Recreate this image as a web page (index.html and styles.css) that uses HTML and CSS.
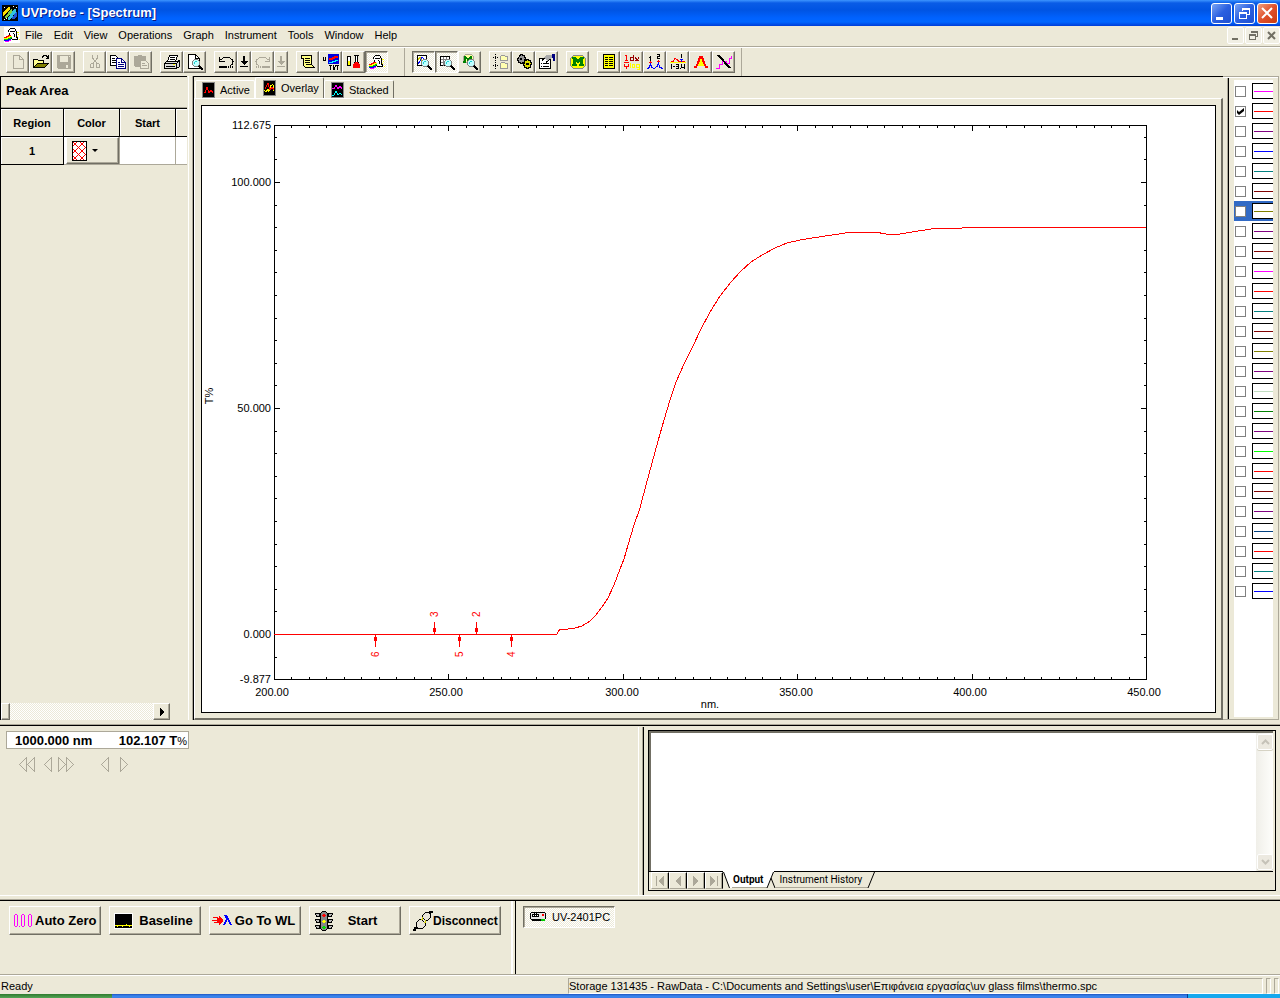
FILE: index.html
```
<!DOCTYPE html>
<html lang="en">
<head>
    <meta charset="UTF-8">
    <meta name="viewport" content="width=device-width, initial-scale=1.0">
    <title>UVProbe - [Spectrum]</title>
    <link rel="stylesheet" href="styles.css">
</head>
<body>
    <header class="titlebar">
        <svg class="icon" viewBox="0 0 16 16"><path fill="#000" d="M0 0h16v16H0z"/><path fill="#ffe000" d="M1 8l5-6h2v2l-6 7H1z"/><path fill="#80d040" d="M3 12l6-8h1v3l-5 6H3z"/><path fill="#30c0e0" d="M6 13l6-9h2v3l-6 8H6z"/><path fill="#2050d0" d="M10 13l4-6h1v4l-3 3h-2z"/><path fill="#fff" d="M2 2h1v1H2zM11 1h1v1h-1zM14 2h1v1h-1zM2 14h1v1H2zM4 13h1v1H4z"/></svg>
        <h1>UVProbe - [Spectrum]</h1>
        <div class="window-buttons">
            <button class="win-btn" aria-label="Minimize"><svg viewBox="0 0 19 19"><path fill="#fff" d="M4 13h7v3H4z"/></svg></button>
            <button class="win-btn" aria-label="Restore"><svg viewBox="0 0 19 19"><path fill="none" stroke="#fff" d="M7.5 7V4.500h7v6H12M4.500 8.500h7v6h-7zM4 9.500h8M7 5.500h8"/></svg></button>
            <button class="win-btn close" aria-label="Close"><svg viewBox="0 0 19 19"><path fill="none" stroke="#fff" stroke-width="2" shape-rendering="auto" d="M4 4l10 10M14 4L4 14"/></svg></button>
        </div>
    </header>

    <nav class="menubar">
        <svg class="icon doc-icon" viewBox="0 0 16 16"><use href="#probe"/></svg>
        <button>File</button>
        <button>Edit</button>
        <button>View</button>
        <button>Operations</button>
        <button>Graph</button>
        <button>Instrument</button>
        <button>Tools</button>
        <button>Window</button>
        <button>Help</button>
        <div class="mdi-buttons">
            <button aria-label="Minimize document"><svg viewBox="0 0 15 15"><path fill="#716f64" d="M4 10h6v2H4z"/></svg></button>
            <button aria-label="Restore document"><svg viewBox="0 0 15 15"><path fill="none" stroke="#716f64" d="M5.500 5V3.500h6v5H10M3.500 6.500h6v5h-6zM3 7.500h7M5 4.500h7"/></svg></button>
            <button aria-label="Close document"><svg viewBox="0 0 15 15"><path fill="none" stroke="#716f64" stroke-width="2" shape-rendering="auto" d="M4 4l7 7M11 4l-7 7"/></svg></button>
        </div>
    </nav>

    <div class="toolbar">
        <div class="tool-group">
            <button class="tool" aria-label="New"><svg viewBox="0 0 16 16"><path fill="none" stroke="#aca899" d="M3.500 1.500h6l4 4v9h-10zM9.500 1.500v4h4"/></svg></button>
            <button class="tool" aria-label="Open"><svg viewBox="0 0 16 16"><path fill="#ffff90" stroke="#000" d="M.5 13.500v-8h4l1 1h5v3"/><path fill="#808000" stroke="#000" d="M.5 13.500l4-4h11l-4 4z"/><path fill="none" stroke="#000" d="M9 3.500l2-2h2l2 2M15.500 1v3H13"/></svg></button>
            <button class="tool" aria-label="Save"><svg viewBox="0 0 16 16"><path fill="#aca899" d="M1 1h14v14H2l-1-1z"/><path fill="#ece9d8" d="M4 2h8v6H4zM10 11h2v3h-2zM13 2h1v1h-1z"/></svg></button>
        </div>
        <div class="tool-group">
            <button class="tool" aria-label="Cut"><svg viewBox="0 0 16 16"><path fill="none" stroke="#aca899" d="M5.500 1v3l5 6M10.500 1v3l-5 6"/><path fill="none" stroke="#aca899" d="M4.500 9.500h2v4h-3v-3zM9.500 9.500h2l1 1v3h-3z"/></svg></button>
            <button class="tool" aria-label="Copy"><svg viewBox="0 0 16 16"><path fill="#fff" stroke="#000" d="M.5 1.500h5l3 3v7h-8z"/><path stroke="#000" d="M2 4.500h3M2 6.500h4M2 8.500h4"/><path fill="#fff" stroke="#000080" d="M6.500 4.500h5l4 4v6h-9z"/><path fill="none" stroke="#000080" d="M11.500 4.500v4h4M8 8.500h2M8 10.500h6M8 12.500h6"/></svg></button>
            <button class="tool" aria-label="Paste"><svg viewBox="0 0 16 16"><path fill="#aca899" d="M1 2h4V1h4v1h4v11H2l-1-1z"/><path fill="#ece9d8" stroke="#aca899" d="M7.500 6.500h5l3 3v5h-8z"/><path stroke="#aca899" d="M9 9.500h3M9 11.500h5M4 3.500h6"/></svg></button>
        </div>
        <div class="tool-group">
            <button class="tool" aria-label="Print"><svg viewBox="0 0 16 16"><path fill="#fff" stroke="#000" d="M3.500 7.500l2-6h8l-2 6z"/><path stroke="#000" d="M6 3.500h5M6 5.500h5"/><path fill="#dcdcdc" stroke="#000" d="M.5 9.500l2-2h11l2-1v6l-3 2h-12z"/><path stroke="#000" fill="none" d="M1 9.500h11l3-2M12.500 9v5M2 12.500h9"/><path fill="#ff0" d="M9 10h2v1H9z"/></svg></button>
            <button class="tool" aria-label="Print preview"><svg viewBox="0 0 16 16"><path fill="#fff" stroke="#000" d="M1.500.5h7l4 4v10h-11z"/><path fill="none" stroke="#000" d="M8.500.5v4h4"/><use href="#lens"/></svg></button>
        </div>
        <div class="tool-group">
            <button class="tool" aria-label="Undo"><svg viewBox="0 0 16 16"><path fill="none" stroke="#000" d="M3 5.500l3-2h5l3 2 1 2-1 3-2 1M1.500 3v4h5M2 5.500h2"/><path stroke="#000" stroke-width="2" d="M1 13h8M10 13h1M12 13h1M14 13h1"/></svg></button>
            <button class="tool drop" aria-label="Undo list"><svg viewBox="0 0 10 16"><path d="M4 2h2v5h3L5 11 1 7h3zM1 12h8v1H1z"/></svg></button>
            <button class="tool" aria-label="Redo"><svg viewBox="0 0 16 16"><path fill="none" stroke="#aca899" d="M13 5.500l-3-2H5l-3 2-1 2 1 3 2 1M14.500 3v4h-5M14 5.500h-2"/><path stroke="#aca899" stroke-width="2" d="M7 13h8M5 13h1M3 13h1M1 13h1"/></svg></button>
            <button class="tool drop" aria-label="Redo list"><svg viewBox="0 0 10 16"><path fill="#aca899" d="M4 2h2v5h3L5 11 1 7h3zM1 12h8v1H1z"/></svg></button>
        </div>
        <div class="tool-group">
            <button class="tool" aria-label="Report"><svg viewBox="0 0 16 16"><path fill="#ffff80" stroke="#000" d="M1.500 1.500h10v9l3 3h-9l-2-2v-7h-2z"/><path stroke="#000" d="M5 4.500h5M5 6.500h5M5 8.500h5M6 10.500h5M12 13.500h3"/></svg></button>
            <button class="tool" aria-label="Kinetics"><svg viewBox="0 0 16 16"><path fill="#0000e0" d="M5 0h11v10H5z"/><path fill="red" d="M6 4h3V3h2V2h4v2h-3v1h-2v1H6z"/><path fill="#0ff" d="M6 8h3V7h3V6h3v1h-2v1h-3v1H6z"/><path fill="none" stroke="#000" d="M.5 3v3h2V3M6 11.500h3M7.500 11v5M10.500 11v2h1v3M12.500 11v2M10.500 14v2M13 11.500h3M14.500 11v5"/></svg></button>
            <button class="tool" aria-label="Photometric"><svg viewBox="0 0 16 16"><path fill="#fff" stroke="#000" d="M1.500 2.500h3v9h-3z"/><path fill="#ff0" d="M2 7h2v4H2z"/><path fill="#fff" stroke="#000" d="M8 1.500h5M9.500 1.500v6l-2 3v3h6v-3l-2-3v-6"/><path fill="red" d="M9 8h3l2 3v3H7v-3z"/></svg></button>
            <button class="tool pressed" aria-label="Spectrum"><svg viewBox="0 0 16 16">
                <g id="probe">
                    <path fill="#fff" d="M5 3h6v2h2v8H9V8H5z"/>
                    <path fill="#000" d="M6 1h5v1H6zM5 2h1v1H5zM11 2h1v2h-1zM4 3h1v2H4zM6 4h5v1H6zM12 4h1v7h-1zM5 6h1v2H5zM9 6h1v1H9zM10 7h1v3h-1zM13 10h1v2h-1zM8 12h6v1H8zM7 11h1v1H7z"/>
                    <path fill="red" d="M0 10h2V9h2V8h3v1H5v1H3v1H0z"/>
                    <path fill="#ff0" d="M0 11h3v-1h2V9h3v1H6v1H4v1H0zM13 5h2v1h-2zM14 7h1v1h-1zM13 9h1v1h-1zM15 12h1v1h-1z"/>
                    <path fill="#0c0" d="M0 12h4v-1h2v-1h2v1H7v1H5v1H0z"/>
                    <path fill="#00f" d="M0 13h4v-1h3v1H5v1H0z"/>
                    <path fill="#f0f" d="M1 14h4v-1h2v1H5v1H1z"/>
                </g>
            </svg></button>
        </div>
        <div class="tool-group bar">
            <button class="tool pressed" aria-label="Graph view"><svg viewBox="0 0 16 16"><path fill="#fff" stroke="#000" d="M1.500 1.500h9v10h-9z"/><path fill="none" stroke="#00f" d="M2 10l2-3 2-4 2 2 1 3"/><path fill="none" stroke="#cc0" d="M2 5.500l2-2 2 3 2 3"/><use href="#lens"/></svg></button>
            <button class="tool pressed" aria-label="Table view"><svg viewBox="0 0 16 16"><path fill="#fff" stroke="#000" d="M1.500 2.500h9v9h-9z"/><path stroke="#808080" d="M2 5.500h9M2 8.500h9M4.500 3v9M7.500 3v9"/>
                <g id="lens"><path fill="#c0ffff" stroke="#808080" d="M7.500 5.500h3l2 2v3l-2 2h-3l-2-2v-3z"/><path fill="#20d0d0" d="M8 7h2v1H8zM7 8h1v2H7z"/><path fill="#000" d="M12 11h1v1h1v1h1v1h1v2h-2v-1h-1v-1h-1v-1h-1v-1h1z"/></g>
            </svg></button>
            <button class="tool" aria-label="Method view"><svg viewBox="0 0 16 16"><path fill="#ffffa0" stroke="#aca899" d="M1.500 2.500l2-2h6l2 2v6h-10z"/><path fill="#008000" d="M2 2h2v1h1v1h2V3h1V2h2v7H8V5H7v2H5V5H4v4H1V7h1z"/><use href="#lens"/></svg></button>
        </div>
        <div class="tool-group">
            <button class="tool" aria-label="Data tree"><svg viewBox="0 0 16 16"><path stroke="#000" stroke-dasharray="1 1" d="M2.500 0v15M0 3.500h6M0 11.500h6"/><path fill="#ffffb0" stroke="#999" d="M7.500 2.500l1-1h3l1 1h2v4h-7zM7.500 9.500l1-1h3l1 1h2v5h-7z"/></svg></button>
            <button class="tool" aria-label="Settings"><svg viewBox="0 0 16 16"><path fill="#999" stroke="#000" d="M3.500 1.500h1v-1h2v1h2v2h1v2h-1v3h-2v1h-2v-1h-2v-2h-1v-2h1z"/><path fill="#dd0" stroke="#000" d="M8.500 6.500h2v-1h2v1h2v2h1v2h-1v3h-2v1h-2v-1h-2v-2h-1v-2h1z"/><path fill="#000" d="M4 4h2v2H4zM10 9h3v2h-3z"/></svg></button>
            <button class="tool" aria-label="Properties"><svg viewBox="0 0 16 16"><path fill="#fff" stroke="#000" d="M.5 4.500h11v10H.5z"/><path fill="none" stroke="#000" d="M2 9.500h1M4 9.500h6M2 12.500h1M4 12.500h6M3 6.500l4-4 3 3-3 3"/><path fill="#aaa" d="M5 3l3-2h5v3L8 7z"/><path fill="#000080" d="M13 0h3v7h-2z"/></svg></button>
        </div>
        <div class="tool-group">
            <button class="tool" aria-label="Method"><svg viewBox="0 0 16 16"><path fill="#ff0" stroke="#888" d="M.5 4.500l3-3h9l3 3v7l-3 3h-9l-3-3z"/><path fill="#008000" d="M2 3h4l2 3 2-3h4v2h-1v5h1v2H9v-2h1V7L8 10 6 7v3h1v2H2v-2h1V5H2z"/></svg></button>
        </div>
        <div class="tool-group last">
            <button class="tool" aria-label="Data print"><svg viewBox="0 0 16 16"><path fill="#ff0" stroke="#000" d="M2.500.5h11v14h-11z"/><path stroke="#000" stroke-dasharray="3 1 4" d="M4 3.500h8M4 5.500h8M4 7.500h8M4 9.500h8M4 11.500h8"/></svg></button>
            <button class="tool" aria-label="Manipulate"><svg viewBox="0 0 16 16"><path fill="none" stroke="red" d="M1 1.500h1.500V6M1 6.500h3M0 8.500h5M.5 10v2h4v-2M2.500 12v3"/><path fill="none" stroke="#900" d="M9.500 1v5M10 6.500H6.500v-3H9M11.500 3v1h1v1h1v1h1v1M14.500 3v1h-1M12.500 5v1h-1v1"/><path fill="none" stroke="#ff0" d="M6.500 9v5M8.500 10.500h2v3h-2zM15.500 10.500h-3v3h3M15.500 10v5.500h-3"/></svg></button>
            <button class="tool" aria-label="Peak pick"><svg viewBox="0 0 16 16"><path fill="none" stroke="#000" d="M2 3.500h1.500V7M3.500 2v2M10 .5h2v2h-2v2h3"/><path stroke="red" d="M3.500 7v4M11.500 6v4M2 8.500h3M10 7.500h3"/><path fill="none" stroke="#00f" d="M0 14.500h1l1-1 1.500-3 1.500 3 2 1 3-2 1.500-3 1.500 4 3 1"/></svg></button>
            <button class="tool" aria-label="Point pick"><svg viewBox="0 0 16 16"><path fill="none" stroke="red" d="M1 7.500h2l2-3 2 1 2 2h6"/><path stroke="#ff0" d="M0 8.500h16"/><path fill="none" stroke="#00f" d="M11.500 5v3M10 5.500h3"/><path fill="none" stroke="#000" d="M11.500 0v4M1.500 10v5M3 12.500h2M6 10.500h2v4H6M6 12.500h2M10 14.500h1M11.500 10v3h3M14.500 10v5"/></svg></button>
            <button class="tool" aria-label="Peak area"><svg viewBox="0 0 16 16"><path fill="#ff0" d="M4 12l3-8h2l3 8z"/><path fill="none" stroke="red" stroke-width="2" d="M1 13h2l2-4 2-6h2l2 6 2 4h2"/></svg></button>
            <button class="tool" aria-label="Point edit"><svg viewBox="0 0 16 16"><path fill="none" stroke="#f0f" d="M0 14.500h3v-4h3v-3h4v2h3v-5h2v-3"/><path stroke="#000" stroke-width="2" d="M2 1l12 13"/></svg></button>
        </div>
    </div>

    <main class="workspace">
        <section class="peak-panel">
            <h2>Peak Area</h2>
            <table class="peak-table">
                <thead>
                    <tr><th class="col-region">Region</th><th class="col-color">Color</th><th class="col-start">Start</th><th></th></tr>
                </thead>
                <tbody>
                    <tr>
                        <th>1</th>
                        <td class="color-cell"><button class="color-btn" aria-label="Region color"><svg class="hatch" viewBox="0 0 15 20"><path fill="#fff" stroke="#000" d="M.5.5h14v19H.5z"/><path stroke="red" fill="none" d="M1 5l4-4M1 12L12 1M1 19L14 6M8 19l6-6M1 15l4 4M1 8l11 11M1 1l13 13M8 1l6 6"/></svg><span class="arrow"></span></button></td>
                        <td></td>
                        <td></td>
                    </tr>
                </tbody>
            </table>
            <div class="h-scroll">
                <button class="scroll-thumb" aria-label="Scroll thumb"></button>
                <button class="scroll-right" aria-label="Scroll right"><svg viewBox="0 0 8 8"><path d="M2 0l4 4-4 4z"/></svg></button>
            </div>
        </section>
        <div class="splitter"></div>
        <section class="graph-panel">
            <div class="tabs">
                <button class="tab"><svg viewBox="0 0 13 16"><path stroke="#888" d="M.5.500h12v15H.5z"/><path fill="none" stroke="red" d="M2 10.500h1l2-5 2 5 2-2 2 2"/></svg>Active</button>
                <button class="tab active"><svg viewBox="0 0 13 16"><path stroke="#888" d="M.5.500h12v15H.5z"/><path fill="none" stroke="#ff0" d="M1 10.500l2 1 2-2 1 2 2-6 2-1 1 6"/><path fill="none" stroke="red" d="M2 9l3-6 2 7 2-3 2 3"/></svg>Overlay</button>
                <button class="tab"><svg viewBox="0 0 13 16"><path stroke="#888" d="M.5.500h12v15H.5z"/><path fill="none" stroke="#f0f" d="M1 6.500h2l2-3 2 3 2-2 2 2"/><path fill="none" stroke="#0ff" d="M1 13h2l2-4 2 4 2-2 2 2"/></svg>Stacked</button>
            </div>
            <div class="tab-page">
                <div class="graph-frame">
                    <svg class="graph" viewBox="0 0 1013 606">
                        <path class="axis" d="M72.500 19.500h872v554h-872z"/>
                        <path class="axis" id="ticks" d=""/>
                        <g class="labels y-labels">
                            <text x="69" y="23">112.675</text>
                            <text x="69" y="80">100.000</text>
                            <text x="69" y="306">50.000</text>
                            <text x="69" y="532">0.000</text>
                            <text x="69" y="577">-9.877</text>
                        </g>
                        <g class="labels x-labels">
                            <text x="70" y="590">200.00</text>
                            <text x="244" y="590">250.00</text>
                            <text x="420" y="590">300.00</text>
                            <text x="594" y="590">350.00</text>
                            <text x="768" y="590">400.00</text>
                            <text x="942" y="590">450.00</text>
                            <text x="508" y="602">nm.</text>
                            <text transform="translate(11 290) rotate(-90)">T%</text>
                        </g>
                        <polyline class="curve" points="72,528 355,528 358,523 366,523 373,522 380,520 388,515 394,509 400,501 406,492 412,479 418,463 422,453 426,439 432,419 438,402 444,379 450,357 456,335 462,314 468,294 474,276 482,258 490,242 499,223 508,206 518,190 529,176 539,165 549,156 560,149 573,142 585,137 598,134 610,132 630,129 650,126 673,126 684,128 698,128 716,125 736,122 760,122 766,121 776,122 782,121 786,122 790,121 820,121 826,122 832,121 862,121 866,122 870,121 900,121 906,122 912,121 924,122 928,121 944,121"/>
                        <g id="peaks"></g>
                    </svg>
                </div>
            </div>
        </section>
        <aside class="legend-panel">
            <div class="legend" id="legend"></div>
        </aside>
    </main>

    <section class="monitor">
        <div class="readout-pane">
            <div class="readout"><span>1000.000 nm</span><span>102.107 T<i>%</i></span></div>
            <div class="steps">
                <button aria-label="Fast back"><svg width="16" height="15" viewBox="0 0 16 15"><path d="M7.500.5v14l-7-7zM15.500.5v14l-7-7z"/></svg></button>
                <button aria-label="Back"><svg width="8" height="15" viewBox="0 0 8 15"><path d="M7.500.5v14l-7-7z"/></svg></button>
                <button class="forward" aria-label="Fast forward"><svg width="16" height="15" viewBox="0 0 16 15"><path d="M.5.5v14l7-7zM8.500.5v14l7-7z"/></svg></button>
                <button class="single" aria-label="Previous"><svg width="8" height="15" viewBox="0 0 8 15"><path d="M7.500.5v14l-7-7z"/></svg></button>
                <button class="next" aria-label="Next"><svg width="8" height="15" viewBox="0 0 8 15"><path d="M.5.5v14l7-7z"/></svg></button>
            </div>
        </div>
        <div class="output-pane">
            <div class="output-frame">
                <div class="output-body">
                    <textarea class="output-text" aria-label="Output" readonly></textarea>
                    <div class="v-scroll">
                        <button aria-label="Scroll up"><svg viewBox="0 0 9 6"><path d="M1 5l3.500-3.500L8 5"/></svg></button>
                        <button aria-label="Scroll down"><svg viewBox="0 0 9 6"><path d="M1 1l3.500 3.500L8 1"/></svg></button>
                    </div>
                </div>
                <div class="sheet-tabs">
                    <button class="sheet-nav" aria-label="First"><svg viewBox="0 0 10 10"><path d="M1 0h1v10H1zM9 0v10L3 5z"/></svg></button>
                    <button class="sheet-nav" aria-label="Previous"><svg viewBox="0 0 10 10"><path d="M8 0v10L2 5z"/></svg></button>
                    <button class="sheet-nav" aria-label="Next"><svg viewBox="0 0 10 10"><path d="M2 0v10l6-5z"/></svg></button>
                    <button class="sheet-nav" aria-label="Last"><svg viewBox="0 0 10 10"><path d="M1 0v10l6-5zM8 0h1v10H8z"/></svg></button>
                    <svg class="slant" viewBox="0 0 9 18"><path fill="#fff" d="M0-1l7 17h2V-1z"/><path class="edge" d="M.5 0l6 16"/></svg>
                    <button class="sheet current">Output</button>
                    <svg class="slant" viewBox="0 0 9 18"><path fill="#fff" d="M0-1h7L0 16z"/><path class="edge" d="M0 16L6.500 0M4 6l4 10"/></svg>
                    <button class="sheet">Instrument History</button>
                    <svg class="slant" viewBox="0 0 9 18"><path class="edge" d="M0 16L6.500 0"/></svg>
                </div>
            </div>
        </div>
    </section>

    <section class="controls">
        <div class="control-buttons">
            <button class="control"><svg width="18" height="16" viewBox="0 0 18 16"><path fill="#f0f" d="M1 1h2v1H1zM0 2h1v11H0zM3 2h1v11H3zM1 13h2v1H1zM5 13h1v1H5zM8 1h2v1H8zM7 2h1v11H7zM10 2h1v11h-1zM8 13h2v1H8zM15 1h2v1h-2zM14 2h1v11h-1zM17 2h1v11h-1zM15 13h2v1h-2z"/></svg><span>Auto Zero</span></button>
            <button class="control"><svg width="19" height="16" viewBox="0 0 19 16"><path fill="#000" stroke="#fff" d="M.5.5h18v15H.5z"/><path stroke="#ff0" fill="none" d="M1 12.500h17M3 13.500h1M8 13.500h1M12 11.500h1M15 13.500h1"/></svg><span>Baseline</span></button>
            <button class="control goto"><svg width="20" height="14" viewBox="0 0 20 14"><path fill="red" d="M1 3h5v1h1V2h1v1h1v1h1v1h1v3h-1v1H9v1H8v1H7V9H2V8h3V7H0V6h5V4H1z"/><path fill="#00f" d="M12 1h3v1h1v2h1v2h1v2h1v2h1v1h-2v-1h-1V8h-1V6h-1v2h-1v2h-1v1h-2v-1h1V8h1V6h1V4h-1V2h-1z"/></svg><span>Go To WL</span></button>
            <button class="control start"><svg width="20" height="20" viewBox="0 0 20 20"><path fill="#888" stroke="#000" d="M6.500 2.500l2-2h3l2 2v15l-2 2h-3l-2-2z"/><path fill="#bbb" stroke="#000" d="M1.500 2.500h4v3h-3zM1.500 8.500h4v3h-3zM1.500 14.500h4v3h-3zM18.500 2.500h-4v3h3zM18.500 8.500h-4v3h3zM18.500 14.500h-4v3h3z"/><path fill="red" d="M9 3h2v1h1v1h-1v1H9V5H8V4h1z"/><path fill="#ff0" d="M9 9h2v1h1v1h-1v1H9v-1H8v-1h1z"/><path fill="#0d0" d="M9 15h2v1h1v1h-1v1H9v-1H8v-1h1z"/></svg><span>Start</span></button>
            <button class="control long"><svg width="20" height="20" viewBox="0 0 20 20"><path fill="#e8e4d8" stroke="#000" d="M3.500 11.500l3-3h2l4 4v2l-3 3h-4l-2-2zM9.500 4.500l3-3h3l2 2v3l-3 3h-2l-3-3z"/><path stroke="#000" stroke-width="2" d="M0 19h2v-2h3M17 3V1h3"/><path stroke="#cc0" fill="none" d="M8 8.500h1v-2h1M11 11.500h1v-2h1"/></svg><span>Disconnect</span></button>
        </div>
        <div class="devices">
            <button class="device"><svg width="16" height="10" viewBox="0 0 16 10"><path fill="#e8e8e8" stroke="#000" d="M1.500.5h13l1 1v5l-1 1h-13l-1-1v-5z"/><path fill="#fff" stroke="#000" d="M2.500 2.500h6v2h-6zM4.500 1v4M6.500 1v4"/><path fill="#000" d="M2 8h9v1H2z"/><path fill="red" d="M12 2h2v2h-2z"/><path fill="#0c0" d="M11 7h4v2h-4z"/></svg><span>UV-2401PC</span></button>
        </div>
    </section>

    <footer class="statusbar">
        <span class="ready">Ready</span>
        <span class="storage">Storage 131435 - RawData - C:\Documents and Settings\user\Επιφάνεια εργασίας\uv glass films\thermo.spc</span>
        <span class="cell"></span>
        <span class="cell"></span>
    </footer>
    <div class="taskbar"><div class="start-edge"></div><div class="tray-edge"></div></div>

    <script src="script.js"></script>
</body>
</html>
```
FILE: styles.css
```
* {
    box-sizing: border-box;
}
body {
    margin: 0;
    min-height: 100vh;
    display: flex;
    flex-direction: column;
    background: #ece9d8;
    color: #000;
    font-family: "Liberation Sans", Arial, sans-serif;
    font-size: 11px;
    line-height: 14px;
}
button {
    font: inherit;
    color: inherit;
    padding: 0;
    border: 0;
    background: none;
    white-space: nowrap;
}
svg {
    display: block;
    flex: none;
    shape-rendering: crispEdges;
}
.icon {
    width: 16px;
    height: 16px;
}

/* Title bar */
.titlebar {
    height: 26px;
    padding: 0 2px;
    display: flex;
    align-items: center;
    gap: 3px;
    background: linear-gradient(to bottom, #3d95ff 0, #0a5ce6 3px, #0054e3 10px, #0062ff 18px, #0066ff 22px, #003dd7 26px);
}
.titlebar h1 {
    margin: 0;
    flex: 1;
    color: #fff;
    font-size: 13px;
    font-weight: bold;
    text-shadow: 1px 1px #0a1883;
}
.window-buttons {
    display: flex;
    gap: 2px;
}
.win-btn {
    width: 21px;
    height: 21px;
    border: 1px solid #fff;
    border-radius: 3px;
    background: linear-gradient(135deg, #7aa5f4, #2a5fe0 50%, #1f50d0);
}
.win-btn svg {
    width: 19px;
    height: 19px;
}
.win-btn.close {
    background: linear-gradient(135deg, #f0a080, #e0502a 50%, #c83c10);
}

/* Menu */
.menubar {
    height: 21px;
    padding: 0 0 2px 4px;
    display: flex;
    align-items: center;
    border-bottom: 1px solid #aca899;
}
.menubar > button {
    padding: 0 5px 0 6px;
}
.doc-icon {
    background: #fff;
    margin-right: -1px;
}
.mdi-buttons {
    margin-left: auto;
    display: flex;
    gap: 1px;
}
.mdi-buttons button {
    width: 17px;
    height: 17px;
    border: 1px solid #fff;
    border-radius: 2px;
    background: #f1efe4;
}
.mdi-buttons svg {
    width: 15px;
    height: 15px;
}

/* Toolbar */
.toolbar {
    height: 29px;
    padding-left: 6px;
    display: flex;
    align-items: center;
    gap: 8px;
    border-top: 1px solid #fff;
}
.tool-group {
    display: flex;
}
.tool-group.bar {
    margin-left: 8px;
    padding-left: 7px;
    border-left: 1px solid #aca899;
}
.tool-group.last {
    padding-right: 6px;
    border-right: 1px solid #aca899;
}
.tool-group.bar, .tool-group.last {
    height: 28px;
    align-items: center;
}
.tool {
    width: 23px;
    height: 22px;
    display: flex;
    align-items: center;
    justify-content: center;
    border: 1px solid;
    border-color: #fff #716f64 #716f64 #fff;
    box-shadow: inset -1px -1px #aca899;
}
.tool svg {
    width: 16px;
    height: 16px;
}
.tool.drop {
    width: 14px;
}
.tool.drop svg {
    width: 10px;
}
.tool.pressed, .device {
    border-color: #716f64 #fff #fff #716f64;
    box-shadow: inset 1px 1px #aca899;
    background: repeating-conic-gradient(#fff 0 25%, #ece9d8 0 50%) 0 0 / 2px 2px;
}

/* Workspace */
.workspace {
    flex: 1;
    display: flex;
}
.peak-panel {
    width: 187px;
    border-top: 1px solid #000;
    border-left: 1px solid #000;
    display: flex;
    flex-direction: column;
}
.peak-panel h2 {
    margin: 0;
    height: 31px;
    padding: 7px 5px;
    font-size: 13px;
    border-bottom: 1px solid #aca899;
}
.peak-table {
    width: 100%;
    table-layout: fixed;
    border-collapse: separate;
    border-spacing: 0;
    border-top: 1px solid #000;
}
.peak-table th, .peak-table td {
    height: 28px;
    padding: 0;
    border-right: 1px solid #000;
    border-bottom: 1px solid #000;
    box-shadow: inset 1px 1px #fff;
}
.peak-table td {
    background: #fff;
    border-color: #aca899;
}
.peak-table tr > :last-child {
    border-right: 0;
}
.col-region {
    width: 63px;
}
.col-color, .col-start {
    width: 56px;
}
.color-btn {
    width: 53px;
    height: 27px;
    padding-left: 5px;
    margin-left: 2px;
    display: flex;
    align-items: center;
    gap: 5px;
    border: 1px solid;
    border-color: #fff #716f64 #716f64 #fff;
    box-shadow: inset -1px -1px #aca899;
    background: #ece9d8;
}
.hatch {
    width: 15px;
    height: 20px;
}
.arrow {
    border: 3px solid transparent;
    border-top-color: #000;
    border-bottom: 0;
}
.h-scroll {
    width: 169px;
    height: 17px;
    margin-top: auto;
    display: flex;
    justify-content: space-between;
    background: repeating-conic-gradient(#fff 0 25%, #ece9d8 0 50%) 0 0 / 2px 2px;
}
.h-scroll button {
    border: 1px solid;
    border-color: #fff #716f64 #716f64 #fff;
    box-shadow: inset -1px -1px #aca899;
    background: #ece9d8;
}
.scroll-thumb {
    width: 9px;
}
.scroll-right {
    width: 17px;
}
.scroll-right svg {
    width: 8px;
    height: 8px;
    margin: 0 auto;
}
.splitter {
    width: 5px;
    margin-left: 1px;
    border-left: 1px solid #fff;
    border-right: 1px solid #aca899;
}
.graph-panel {
    flex: 1;
    min-width: 0;
    display: flex;
    flex-direction: column;
    border-top: 1px solid #000;
    border-left: 1px solid #000;
}
.tabs {
    height: 21px;
    padding-left: 1px;
    display: flex;
    align-items: flex-end;
}
.tab {
    height: 18px;
    padding: 0 4px 0 6px;
    display: flex;
    align-items: center;
    gap: 5px;
    border: 1px solid #fff;
    border-bottom: 0;
    border-right-color: #716f64;
    border-radius: 2px 2px 0 0;
}
.tab:first-child {
    border-right-color: #fff;
}
.tab.active {
    height: 22px;
    margin-bottom: -1px;
    padding: 0 4px 2px 7px;
    background: #ece9d8;
}
.tab svg {
    width: 13px;
    height: 16px;
}
.tab-page {
    flex: 1;
    padding: 6px 5px 5px 6px;
    display: flex;
    border: 1px solid #fff;
    border-right: 2px solid #716f64;
    border-bottom: 2px solid #716f64;
}
.graph-frame {
    flex: 1;
    border: 1px solid #000;
    background: #fff;
}
.graph {
    width: 100%;
    height: auto;
}
.axis {
    fill: none;
    stroke: #000;
}
.labels {
    font-size: 11px;
    text-anchor: middle;
}
.y-labels {
    text-anchor: end;
}
.curve {
    fill: none;
    stroke: #f00;
}
#peaks {
    fill: #f00;
    font-size: 10px;
}

/* Spectrum list */
.legend-panel {
    width: 56px;
    margin-right: 1px;
    padding: 3px 5px 2px;
    display: flex;
    border: 1px solid #aca899;
    border-left: 0;
    background: linear-gradient(to right, transparent 4px, #aca899 4px, #aca899 5px, #000 5px, #000 6px, transparent 6px);
    box-shadow: inset 0 1px #fff;
}
.legend {
    flex: 1;
    margin-left: 6px;
    padding-top: 1px;
    background: #fff;
}
.legend-row {
    height: 20px;
    display: flex;
    align-items: center;
    padding-left: 1px;
}
.legend-row.selected {
    background: #316ac5;
}
.legend-row input {
    appearance: none;
    width: 11px;
    height: 11px;
    margin: 0 6px 0 0;
    border: 1px solid #808080;
    background: #fff;
}
.legend-row input:checked {
    background: #fff url("data:image/svg+xml,%3Csvg xmlns='http://www.w3.org/2000/svg' viewBox='0 0 9 9'%3E%3Cpath fill='%23000' d='M1 3l2 2 5-4v3L3 8 1 6z'/%3E%3C/svg%3E") center / 9px 9px;
}
.swatch {
    flex: 1;
    height: 16px;
    padding: 7px 0 0 1px;
    border: 1px solid #000;
    border-right: 0;
    background: #fff;
}
.swatch i {
    display: block;
    height: 1px;
}

/* Monitor and output */
.monitor {
    height: 172px;
    margin-top: 4px;
    display: flex;
    border-top: 1px solid #aca899;
    border-bottom: 1px solid #fff;
    box-shadow: inset 0 1px #000;
    padding-top: 2px;
}
.readout-pane {
    width: 639px;
    padding: 4px 6px;
    border-right: 1px solid #fff;
}
.readout {
    width: 183px;
    height: 18px;
    padding: 2px 1px 0 8px;
    display: flex;
    align-items: center;
    justify-content: space-between;
    border: 1px solid #aca899;
    background: #fff;
    font-size: 13px;
    font-weight: bold;
}
.readout i {
    font-style: normal;
    font-weight: normal;
    font-size: 11px;
}
.steps {
    display: flex;
    padding: 8px 0 0 13px;
}
.steps button + button {
    margin-left: 9px;
}
.steps .forward {
    margin-left: 6px;
}
.steps .single {
    margin-left: 27px;
}
.steps .next {
    margin-left: 11px;
}
.steps path {
    fill: none;
    stroke: #aca899;
}
.output-pane {
    flex: 1;
    margin-left: 3px;
    padding: 3px 4px 4px;
    border-left: 1px solid #aca899;
    box-shadow: inset 1px 0 #000;
    display: flex;
}
.output-frame {
    flex: 1;
    margin-left: 1px;
    display: flex;
    flex-direction: column;
    border: 1px solid #000;
    padding: 0 2px 1px 0;
}
.output-body {
    flex: 1;
    display: flex;
    border-top: 2px solid #716f64;
    border-left: 2px solid #716f64;
}
.output-text {
    flex: 1;
    border: 0;
    resize: none;
    background: #fff;
}
.v-scroll {
    width: 17px;
    padding: 1px 0;
    display: flex;
    flex-direction: column;
    justify-content: space-between;
    background: linear-gradient(to right, #f0efe9, #fefefb);
}
.v-scroll button {
    width: 16px;
    height: 16px;
    margin-left: 1px;
    border: 1px solid #fff;
    border-radius: 2px;
    background: #ece9e0;
    box-shadow: 0 1px #d6d3c4;
}
.v-scroll svg {
    width: 9px;
    height: 6px;
    margin: 0 auto;
    shape-rendering: auto;
}
.v-scroll path {
    fill: none;
    stroke: #c5c2b8;
    stroke-width: 2;
}
.sheet-tabs {
    height: 18px;
    padding-left: 2px;
    display: flex;
    border-top: 1px solid #000;
}
.sheet-nav {
    width: 18px;
    height: 17px;
    border: 1px solid #fff;
    border-right-color: #000;
    border-bottom-color: #aca899;
    box-shadow: inset -1px 0 #aca899;
}
.sheet-nav svg {
    width: 10px;
    height: 10px;
    margin: 0 auto;
    fill: #aca899;
}
.slant {
    width: 9px;
    height: 18px;
    overflow: visible;
}
.edge {
    fill: none;
    stroke: #000;
    shape-rendering: auto;
}
.sheet {
    height: 16px;
    padding: 0 6px 0 4px;
    border-bottom: 1px solid #aca899;
    font-family: Roboto, "Liberation Sans", sans-serif;
    font-size: 10px;
}
.sheet.current {
    margin-top: -1px;
    height: 17px;
    padding: 1px 3px 0 1px;
    background: #fff;
    font-weight: bold;
}

/* Instrument controls */
.controls {
    height: 75px;
    margin-top: 3px;
    display: flex;
    border-top: 1px solid #aca899;
    box-shadow: inset 0 1px #000;
    padding-top: 1px;
}
.control-buttons {
    width: 513px;
    padding: 5px 9px;
    display: flex;
    align-items: flex-start;
    gap: 8px;
    border-right: 2px solid #fff;
}
.control {
    width: 92px;
    height: 29px;
    padding: 0 4px;
    display: flex;
    align-items: center;
    gap: 3px;
    border: 1px solid;
    border-color: #fff #716f64 #716f64 #fff;
    box-shadow: inset -1px -1px #aca899;
    font-size: 13px;
    font-weight: bold;
}
.control span {
    flex: 1;
    text-align: center;
}
.control.goto {
    padding-left: 2px;
    gap: 2px;
}
.control.start {
    padding-right: 12px;
}
.control.long {
    padding: 0 4px 0 3px;
    gap: 0;
    font-size: 12px;
}
.devices {
    flex: 1;
    margin-left: 2px;
    padding: 5px 7px;
    border-left: 1px solid #000;
}
.device {
    height: 22px;
    padding: 0 4px 0 6px;
    display: flex;
    align-items: center;
    gap: 6px;
    border: 1px solid;
    border-color: #716f64 #fff #fff #716f64;
}

/* Status bar */
.statusbar {
    height: 20px;
    padding: 3px 1px 0;
    display: flex;
    gap: 3px;
    border-top: 1px solid #aca899;
    box-shadow: inset 0 1px #fff;
}
.ready {
    width: 564px;
    line-height: 17px;
}
.storage, .cell {
    height: 16px;
    border: 1px solid;
    border-color: #aca899 #fff #fff #aca899;
}
.storage {
    flex: 1;
    line-height: 15px;
    white-space: nowrap;
    overflow: hidden;
}
.cell {
    width: 5px;
}
.taskbar {
    height: 4px;
    display: flex;
    justify-content: space-between;
    background: linear-gradient(to bottom, #1f54c0, #3a85ee 2px, #3a7ee6);
}
.start-edge {
    width: 112px;
    background: linear-gradient(to bottom, #2f7a2f, #55a555);
}
.tray-edge {
    width: 93px;
    border-left: 1px solid #0a3a90;
    background: #16a8ee;
}
```
FILE: script.js
```
// plot area in svg units
const left = 72.5, right = 944.5, top0 = 19.5, bottom = 573.5;
const xScale = 872 / 250;
const yScale = 4.52;
const zeroY = 528.5;

// axis ticks, every 5 nm and every 5 %
let d = '';
for (let nm = 205; nm < 450; nm += 5) {
    const x = Math.floor(left + (nm - 200) * xScale) + 0.5;
    const len = nm % 50 === 0 ? 5 : 2;
    d += `M${x} ${top0}v${len + 0.5}M${x} ${bottom}v-${len + 0.5}`;
}
for (let t = -5; t <= 110; t += 5) {
    const y = Math.floor(zeroY - t * yScale) + 0.5;
    const len = t % 50 === 0 ? 5 : 2;
    d += `M${left} ${y}h${len + 0.5}M${right} ${y}h-${len + 0.5}`;
}
document.getElementById('ticks').setAttribute('d', d);

// numbered peaks, up = label above the line
const peaks = [
    { n: 6, x: 173, up: false },
    { n: 3, x: 232, up: true },
    { n: 5, x: 257, up: false },
    { n: 2, x: 274, up: true },
    { n: 4, x: 309, up: false }
];
document.getElementById('peaks').innerHTML = peaks.map(p => p.up
    ? `<path d="M${p.x} 516h1v12h-1zM${p.x - 1} 522h3v4h-3z"/><text transform="translate(${p.x + 4} 511) rotate(-90)">${p.n}</text>`
    : `<path d="M${p.x} 529h1v12h-1zM${p.x - 1} 531h3v4h-3z"/><text transform="translate(${p.x + 4} 551) rotate(-90)">${p.n}</text>`
).join('');

// spectrum list
const colors = ['#f0f', '#f00', '#800080', '#00f', '#008080', '#800000', '#808000', '#800080', '#800000',
    '#f0f', '#f00', '#008080', '#800000', '#808000', '#800080', '#c0dcc0', '#008000', '#800080',
    '#0f0', '#f00', '#800000', '#800080', '#004080', '#f00', '#008080', '#00f'];
document.getElementById('legend').innerHTML = colors.map((color, i) => `
    <label class="legend-row${i === 6 ? ' selected' : ''}">
        <input type="checkbox" aria-label="Spectrum ${i + 1}"${i === 1 ? ' checked' : ''}>
        <span class="swatch"><i style="background: ${color}"></i></span>
    </label>`).join('');
```
